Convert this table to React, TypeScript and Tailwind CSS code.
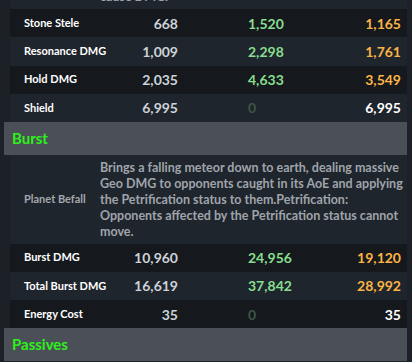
import React from 'react';

type StatRow = {
  label: string;
  base: string;
  mid: string;
  high: string;
  plain?: boolean;
};

const skillRows: StatRow[] = [
  { label: 'Stone Stele', base: '668', mid: '1,520', high: '1,165' },
  { label: 'Resonance DMG', base: '1,009', mid: '2,298', high: '1,761' },
  { label: 'Hold DMG', base: '2,035', mid: '4,633', high: '3,549' },
  { label: 'Shield', base: '6,995', mid: '0', high: '6,995', plain: true },
];

const burstRows: StatRow[] = [
  { label: 'Burst DMG', base: '10,960', mid: '24,956', high: '19,120' },
  { label: 'Total Burst DMG', base: '16,619', mid: '37,842', high: '28,992' },
  { label: 'Energy Cost', base: '35', mid: '0', high: '35', plain: true },
];

const Row: React.FC<{ row: StatRow; index: number }> = ({ row, index }) => (
  <div
    className={`flex items-center h-[28.25px] ${index % 2 === 0 ? 'bg-[#15191e]' : 'bg-[#1f252c]'}`}
  >
    <div className="w-[90px] pl-[14px] text-[11px] font-bold text-white whitespace-nowrap">{row.label}</div>
    <div className="w-[78px] text-right text-[14px] font-bold text-[#cdd2d9]">{row.base}</div>
    <div className={`pl-[70px] text-[14px] font-bold ${row.plain ? 'text-[#3b5644]' : 'text-[#88de8e]'}`}>
      {row.mid}
    </div>
    <div className={`flex-1 pr-[6px] text-right text-[14px] font-bold ${row.plain ? 'text-white' : 'text-[#fcb345]'}`}>
      {row.high}
    </div>
  </div>
);

const Description: React.FC<{ label?: string; text: string; className?: string }> = ({ label, text, className }) => (
  <div className={`flex items-center bg-[#1f252c] ${className ?? ''}`}>
    <div className="w-[90px] pl-[14px] text-[11px] font-bold text-[#a3a8ae] whitespace-nowrap">{label}</div>
    <div className="flex-1 text-[12.5px] leading-[16px] font-bold text-[#9fa4ab]">{text}</div>
  </div>
);

const SectionHeader: React.FC<{ title: string }> = ({ title }) => (
  <div className="-ml-[6px] h-[32.5px] flex items-center pl-[8px] bg-[#4b5058] text-[15px] font-bold text-[#2ef01a]">
    {title}
  </div>
);

export default function App() {
  return (
    <div className="w-[412px] h-[362px] overflow-hidden bg-[#1c2127] font-['Lato',sans-serif]">
      <div className="ml-[10px] mr-[5px] -mt-[11px]">
        <Description text="cause DMG." className="pt-0 pb-[4px] h-[20px] items-end" />
        {skillRows.map((r, i) => (
          <Row key={r.label} row={r} index={i} />
        ))}
        <SectionHeader title="Burst" />
        <Description
          label="Planet Befall"
          text="Brings a falling meteor down to earth, dealing massive Geo DMG to opponents caught in its AoE and applying the Petrification status to them.Petrification: Opponents affected by the Petrification status cannot move."
          className="pt-[5px] pb-[4px]"
        />
        {burstRows.map((r, i) => (
          <Row key={r.label} row={r} index={i} />
        ))}
        <SectionHeader title="Passives" />
      </div>
    </div>
  );
}
